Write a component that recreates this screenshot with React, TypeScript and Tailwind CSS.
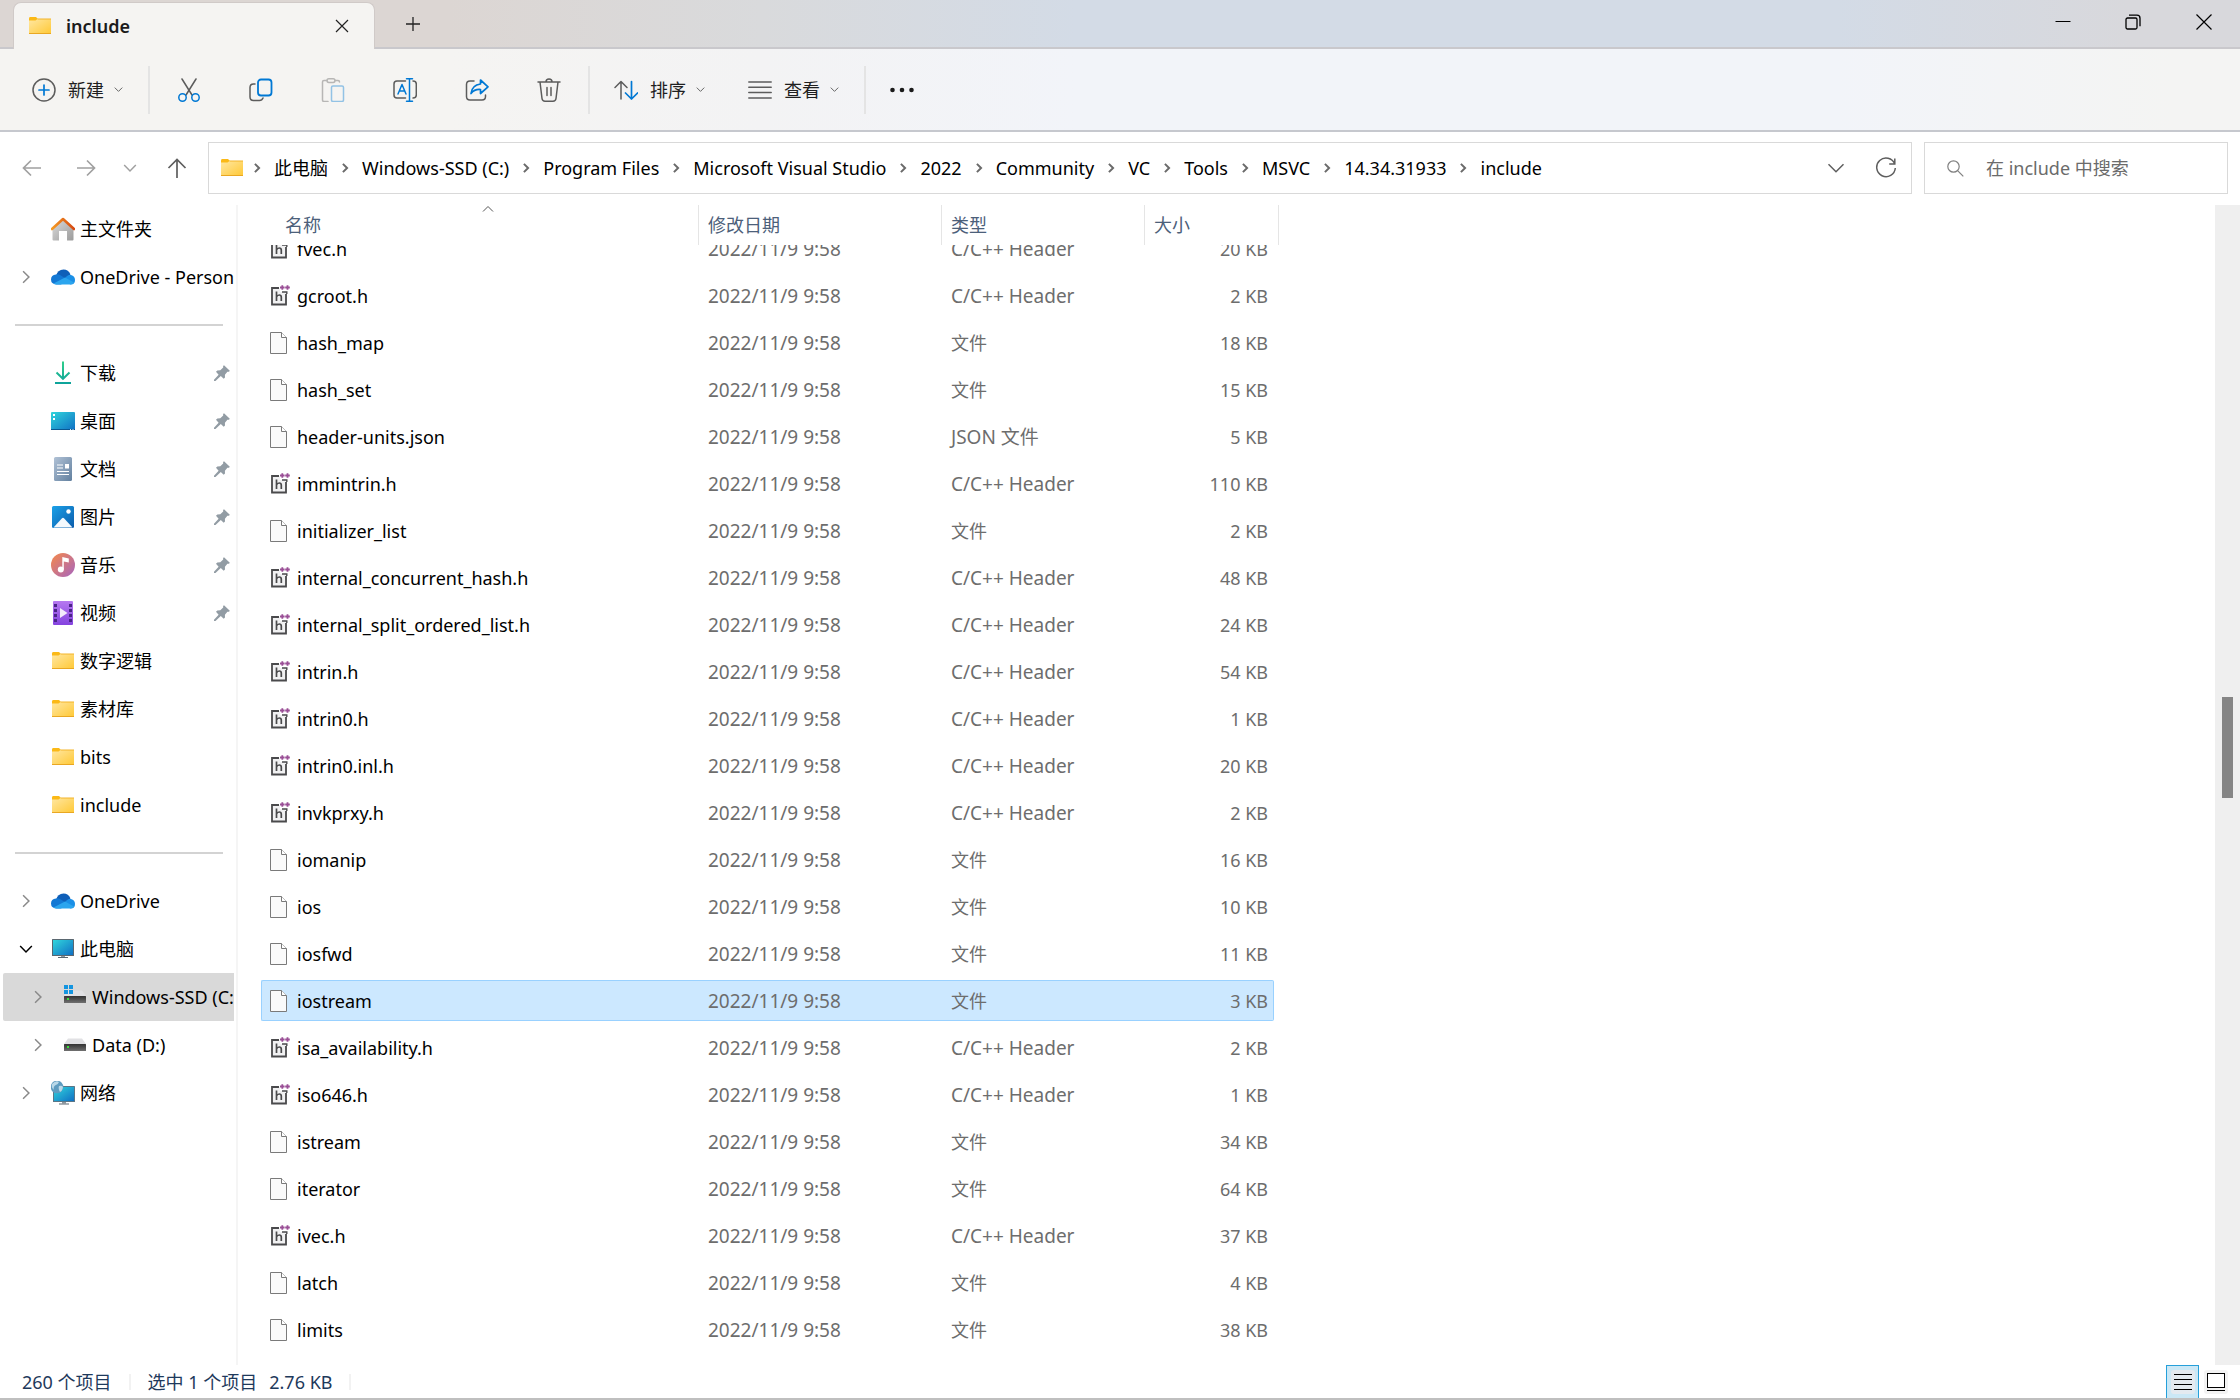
import { useEffect, useRef, useState } from 'react';
import type { ReactNode } from 'react';

type FileRow = { name: string; kind: 'header' | 'plain' | 'json'; size: string };

const files: FileRow[] = [
  { name: 'fvec.h', kind: 'header', size: '20 KB' },
  { name: 'gcroot.h', kind: 'header', size: '2 KB' },
  { name: 'hash_map', kind: 'plain', size: '18 KB' },
  { name: 'hash_set', kind: 'plain', size: '15 KB' },
  { name: 'header-units.json', kind: 'json', size: '5 KB' },
  { name: 'immintrin.h', kind: 'header', size: '110 KB' },
  { name: 'initializer_list', kind: 'plain', size: '2 KB' },
  { name: 'internal_concurrent_hash.h', kind: 'header', size: '48 KB' },
  { name: 'internal_split_ordered_list.h', kind: 'header', size: '24 KB' },
  { name: 'intrin.h', kind: 'header', size: '54 KB' },
  { name: 'intrin0.h', kind: 'header', size: '1 KB' },
  { name: 'intrin0.inl.h', kind: 'header', size: '20 KB' },
  { name: 'invkprxy.h', kind: 'header', size: '2 KB' },
  { name: 'iomanip', kind: 'plain', size: '16 KB' },
  { name: 'ios', kind: 'plain', size: '10 KB' },
  { name: 'iosfwd', kind: 'plain', size: '11 KB' },
  { name: 'iostream', kind: 'plain', size: '3 KB' },
  { name: 'isa_availability.h', kind: 'header', size: '2 KB' },
  { name: 'iso646.h', kind: 'header', size: '1 KB' },
  { name: 'istream', kind: 'plain', size: '34 KB' },
  { name: 'iterator', kind: 'plain', size: '64 KB' },
  { name: 'ivec.h', kind: 'header', size: '37 KB' },
  { name: 'latch', kind: 'plain', size: '4 KB' },
  { name: 'limits', kind: 'plain', size: '38 KB' },
];

const typeLabel = { header: 'C/C++ Header', plain: '文件', json: 'JSON 文件' };

const crumbs = [
  '此电脑',
  'Windows-SSD (C:)',
  'Program Files',
  'Microsoft Visual Studio',
  '2022',
  'Community',
  'VC',
  'Tools',
  'MSVC',
  '14.34.31933',
  'include',
];

/* ---------- icons ---------- */

function FolderIcon() {
  return (
    <svg width="24" height="24" viewBox="0 0 24 24" className="shrink-0">
      <defs>
        <linearGradient id="folder" x1="0" y1="0" x2="1" y2="1">
          <stop offset="0" stopColor="#ffe7a2" />
          <stop offset="1" stopColor="#ffc937" />
        </linearGradient>
      </defs>
      <path d="M1 4.500Q1 3 2 3h6l1.500 1.600V8H1z" fill="#fbb917" />
      <path d="M1 6.500h6.500L9.500 5H23v14.500H1z" fill="url(#folder)" />
      <path d="M9.500 5H23" stroke="#f3b42a" />
      <path d="M1 19.500h22" stroke="#e9a722" />
    </svg>
  );
}

function HomeIcon() {
  return (
    <svg width="24" height="24" viewBox="0 0 24 24">
      <defs>
        <linearGradient id="home" x1="0" y1="0" x2="1" y2="1">
          <stop offset="0" stopColor="#dcdcdc" />
          <stop offset="1" stopColor="#9b9b9b" />
        </linearGradient>
        <linearGradient id="roof" x1="0" y1="0" x2="1" y2="0">
          <stop offset="0" stopColor="#f59a23" />
          <stop offset="1" stopColor="#d64a12" />
        </linearGradient>
      </defs>
      <path d="M1.500 11L12 2l10.500 9v11.500q0 1-1 1H16V14H8v9.500H2.500q-1 0-1-1z" fill="url(#home)" />
      <path d="M1 12L12 2l11 10" fill="none" stroke="url(#roof)" strokeWidth="2.600" strokeLinecap="round" strokeLinejoin="round" />
    </svg>
  );
}

function CloudIcon() {
  return (
    <svg width="24" height="24" viewBox="0 0 24 24">
      <path d="M5 11q1.500-6.500 7.500-6.500 5 0 7 5L12 15z" fill="#0f5fb8" />
      <path d="M5.500 19.500Q0 19 0 14.500 0 10 5 9.500q2-.5 4 .6l8 5-7 4.400z" fill="#1378d4" />
      <path d="M11.500 15.500L16 11q2-1.500 4-1 4 1.200 4 5 0 4.500-4.500 4.500z" fill="#1a8fe6" />
      <path d="M2.500 18.500L14 12.500l9 5q-1 2-3.500 2h-14q-2 0-3-1z" fill="#2ba5ee" />
    </svg>
  );
}

function DownloadIcon() {
  return (
    <svg width="24" height="24" viewBox="0 0 24 24" fill="none" strokeWidth="2">
      <defs>
        <linearGradient id="down" x1="0" y1="0" x2="0" y2="24" gradientUnits="userSpaceOnUse">
          <stop offset="0" stopColor="#31cf8a" />
          <stop offset="1" stopColor="#0ba09c" />
        </linearGradient>
      </defs>
      <path d="M12 .5l.01 17M5.500 11.500l6.500 6.300 6.500-6.300M4 22l16 .01" stroke="url(#down)" />
    </svg>
  );
}

function DesktopIcon() {
  return (
    <svg width="24" height="24" viewBox="0 0 24 24">
      <defs>
        <linearGradient id="screen" x1="0" y1="0" x2="1" y2="1">
          <stop offset="0" stopColor="#30d5dc" />
          <stop offset="1" stopColor="#1070c4" />
        </linearGradient>
      </defs>
      <rect y="3" width="24" height="18" rx="1" fill="url(#screen)" />
      <path d="M0 20h24v.5q0 .5-.5.500H.5q-.5 0-.5-.5z" fill="#0a5791" />
      <path d="M2 5h2v2H2zM2 9h2v2H2z" fill="#fff" />
      <path d="M19 20h1v1h-1zM21.500 20h1v1h-1z" fill="#cfe6f6" />
    </svg>
  );
}

function DocumentIcon() {
  return (
    <svg width="24" height="24" viewBox="0 0 24 24">
      <defs>
        <linearGradient id="doc" x1="0" y1="0" x2="1" y2="1">
          <stop offset="0" stopColor="#b1c2d6" />
          <stop offset="1" stopColor="#62809f" />
        </linearGradient>
      </defs>
      <rect x="3" width="18" height="24" rx="1.500" fill="url(#doc)" />
      <path d="M6 8h6M6 11h6M6 14.500h12M6 17.500h12" stroke="#fff" strokeWidth="1.200" />
      <path d="M14 7h4v4.500h-4z" fill="#fff" />
    </svg>
  );
}

function PictureIcon() {
  return (
    <svg width="24" height="24" viewBox="0 0 24 24">
      <defs>
        <linearGradient id="pic" x1="0" y1="0" x2="1" y2="1">
          <stop offset="0" stopColor="#1ba1e8" />
          <stop offset="1" stopColor="#0b5cab" />
        </linearGradient>
      </defs>
      <rect x="1" y="1" width="22" height="22" rx="1.500" fill="url(#pic)" />
      <circle cx="17.500" cy="6.500" r="2.200" fill="#fff" />
      <path d="M2.500 22.500L11 13.200q1-1 2 0l8.500 9.300z" fill="#f4f9fd" />
    </svg>
  );
}

function MusicIcon() {
  return (
    <svg width="24" height="24" viewBox="0 0 24 24">
      <defs>
        <linearGradient id="music" x1="0" y1="0" x2="1" y2="1">
          <stop offset=".1" stopColor="#ee8555" />
          <stop offset=".9" stopColor="#ae68b4" />
        </linearGradient>
      </defs>
      <circle cx="12" cy="12" r="12" fill="url(#music)" />
      <circle cx="9.800" cy="16.500" r="3" fill="#fff" />
      <path d="M11.300 4l6.500 1.500v4l-5-1v8h-1.500z" fill="#fff" />
    </svg>
  );
}

function VideoIcon() {
  return (
    <svg width="24" height="24" viewBox="0 0 24 24">
      <defs>
        <linearGradient id="video" x1="0" y1="0" x2="0" y2="1">
          <stop offset="0" stopColor="#b678f0" />
          <stop offset="1" stopColor="#8443df" />
        </linearGradient>
      </defs>
      <rect x="2" width="20" height="24" rx="1" fill="url(#video)" />
      <path
        d="M3 3h3v3H3zM3 8h3v3H3zM3 13h3v3H3zM3 18h3v3H3zM18 3h3v3h-3zM18 8h3v3h-3zM18 13h3v3h-3zM18 18h3v3h-3z"
        fill="#4a2488"
      />
      <path d="M9 7l7.500 5L9 17z" fill="#f3ecfb" />
    </svg>
  );
}

function ComputerIcon() {
  return (
    <svg width="24" height="24" viewBox="0 0 24 24">
      <rect x="1" y="2" width="22" height="17" rx=".5" fill="#5a6770" />
      <rect x="2" y="3" width="20" height="15" fill="url(#screen)" />
      <path d="M10 19h4v1.500h-4z" fill="#8b979f" />
      <path d="M7 20.500h10" stroke="#5a6770" strokeWidth="1.200" />
    </svg>
  );
}

function DriveIcon({ system }: { system?: boolean }) {
  return (
    <svg width="24" height="24" viewBox="0 0 24 24">
      <defs>
        <linearGradient id="drive" x1="0" y1="0" x2="0" y2="1">
          <stop offset="0" stopColor="#333" />
          <stop offset="1" stopColor="#707070" />
        </linearGradient>
      </defs>
      <path d="M5 5.500h14l4 5.500H1z" fill="#e1e1e4" />
      <rect x="1" y="11" width="22" height="7" rx=".6" fill="url(#drive)" />
      <path d="M4 13h2v2H4z" fill="#3ae03a" />
      {system && <path d="M1 0h4v4H1zM6 0h4v4H6zM1 5h4v4H1zM6 5h4v4H6z" fill="#1495e0" />}
    </svg>
  );
}

function NetworkIcon() {
  return (
    <svg width="24" height="24" viewBox="0 0 24 24">
      <rect x="2" y="5" width="22" height="16" rx=".5" fill="#5b7686" />
      <rect x="3" y="6" width="20" height="14" fill="url(#screen)" />
      <path d="M11 21h4v1.500h-4z" fill="#8b979f" />
      <path d="M8 23h10" stroke="#5a6770" strokeWidth="1.200" />
      <circle cx="6" cy="6" r="6.300" fill="#5f9cc0" />
      <path d="M1 3q4-4 7-2-1 3-4 3.500Q2 6 3 9 0 7 1 3zM8 5q3-1 4 1-.5 4-3 5-2-3-1-6z" fill="#b9d8e8" />
    </svg>
  );
}

function PinIcon() {
  return (
    <svg width="16" height="16" viewBox="0 0 16 16" className="shrink-0">
      <path
        d="M10 .3l5.800 5.500-.8 1-1.600-.1-2.500 3 .1 2.800-1.300 1.300-2.900-2.800L1.500 16H0v-1.200l4.600-5.100L2 6.800l1.300-1.400 3-.1 2.900-2.700L9.100 1z"
        fill="#929ca4"
      />
    </svg>
  );
}

function PageIcon() {
  return (
    <svg width="18" height="22" viewBox="0 0 18 22" className="shrink-0">
      <path d="M.5.500h11l5 5v16H.5z" fill="#fafafa" stroke="#7a7a7a" />
      <path d="M11.500.500v5h5" fill="#fff" stroke="#7a7a7a" />
    </svg>
  );
}

function HeaderFileIcon() {
  return (
    <svg width="20" height="22" viewBox="0 0 20 22" className="shrink-0">
      <path d="M2 3h8v4h7v12H2z" fill="#f1f1f2" />
      <path d="M9 3H2v16.500h14V9" fill="none" stroke="#4a4a4c" strokeWidth="1.800" />
      <path d="M12 7h4.800v2" fill="none" stroke="#4a4a4c" strokeWidth="1.400" />
      <path d="M6.500 6.500V16M6.500 12q.8-2 2.800-2 2 0 2 2.200V16" fill="none" stroke="#4a4a4c" strokeWidth="1.700" />
      <path d="M10 2.500h4.600M12.300.200v4.600M15.200 2.500h4.600M17.500.200v4.600" stroke="#9a4f96" strokeWidth="1.800" />
    </svg>
  );
}

function Chevron({ dir, size = 12, className = '' }: { dir: 'right' | 'down' | 'up'; size?: number; className?: string }) {
  const d = {
    right: 'M3.500 1l5 5-5 5',
    down: 'M1 3.500l5 5 5-5',
    up: 'M1 8.500l5-5 5 5',
  }[dir];
  return (
    <svg width={size} height={size} viewBox="0 0 12 12" fill="none" stroke="currentColor" className={`shrink-0 ${className}`}>
      <path d={d} vectorEffect="non-scaling-stroke" />
    </svg>
  );
}

/* ---------- title bar ---------- */

function TitleBar() {
  return (
    <header className="flex h-[49px] items-end justify-between border-b-2 border-[#c9c8cc] bg-[linear-gradient(90deg,#dcd6d3_20%,#d9dadc_34%,#d3dbe6_48%,#d3dbe6_82%,#d8d8dc_95%)]">
      <div className="flex h-full items-end">
        <div className="ml-[13px] -mb-0.5 flex h-[47px] w-[362px] items-center rounded-t-lg border border-b-0 border-[#d0cac8] bg-[#f5f4f2] pr-5 pl-3.5">
          <FolderIcon />
          <span className="ml-3.5 flex-1 font-semibold text-[#1b1b1b]">include</span>
          <button aria-label="关闭标签页" className="flex size-6 items-center justify-center">
            <svg width="14" height="14" viewBox="0 0 14 14" stroke="#222" strokeWidth="1.200">
              <path d="M1 1l12 12M13 1L1 13" />
            </svg>
          </button>
        </div>
        <button aria-label="新建标签页" className="ml-6 flex h-[46px] w-7 items-center justify-center">
          <svg width="16" height="16" viewBox="0 0 16 16" stroke="#222" strokeWidth="1.300">
            <path d="M8 1v14M1 8h14" />
          </svg>
        </button>
      </div>
      <div className="flex h-full items-start">
        <button aria-label="最小化" className="flex h-[43px] w-[70px] items-center justify-center">
          <svg width="16" height="16" viewBox="0 0 16 16" stroke="#000">
            <path d="M.5 7.500h15" />
          </svg>
        </button>
        <button aria-label="还原" className="flex h-[43px] w-[70px] items-center justify-center">
          <svg width="16" height="16" viewBox="0 0 16 16" fill="none" stroke="#000" strokeWidth="1.300">
            <rect x="1" y="4" width="11" height="11" rx="1.500" />
            <path d="M4 1.200h8q3 0 3 3v8" />
          </svg>
        </button>
        <button aria-label="关闭" className="flex h-[43px] w-[72px] items-center justify-center">
          <svg width="16" height="16" viewBox="0 0 16 16" stroke="#000" strokeWidth="1.200">
            <path d="M.5.500l15 15M15.500.500l-15 15" />
          </svg>
        </button>
      </div>
    </header>
  );
}

/* ---------- command bar ---------- */

const BLUE = '#0078d4';

function ToolSvg({ children, faded }: { children: ReactNode; faded?: boolean }) {
  return (
    <svg
      width="24"
      height="24"
      viewBox="0 0 24 24"
      fill="none"
      stroke="#5c5c5c"
      strokeWidth="1.500"
      strokeLinecap="round"
      strokeLinejoin="round"
      className={faded ? 'opacity-40' : ''}
    >
      {children}
    </svg>
  );
}

function CommandBar() {
  const tools = [
    {
      label: '剪切',
      icon: (
        <ToolSvg>
          <path d="M5 1l10 16M19 1L9 17" />
          <g stroke={BLUE}>
            <circle cx="5.500" cy="19.500" r="3.700" />
            <circle cx="18.500" cy="19.500" r="3.700" />
          </g>
        </ToolSvg>
      ),
    },
    {
      label: '复制',
      icon: (
        <ToolSvg>
          <path d="M6 6H4.500Q1 6 1 9.500V19q0 3.500 3.500 3.500h6q2.500 0 3.500-2.500" />
          <rect x="9" y="1.500" width="13.500" height="16" rx="3" stroke={BLUE} strokeWidth="1.800" />
        </ToolSvg>
      ),
    },
    {
      label: '粘贴',
      icon: (
        <ToolSvg faded>
          <path d="M6 2.500H3Q1.500 2.500 1.500 4v18q0 1.500 1.500 1.500h4M14 2.500h3q1.500 0 1.500 1.500" />
          <rect x="6" y=".8" width="8" height="3.600" rx="1.800" />
          <rect x="10.500" y="8" width="12" height="15.500" rx="1.500" stroke={BLUE} />
        </ToolSvg>
      ),
    },
    {
      label: '重命名',
      icon: (
        <ToolSvg>
          <path d="M12.500 3H4Q1 3 1 6v11q0 3 3 3h8.500M20 3q3.300 0 3.300 3v11q0 3-3.300 3" />
          <path d="M5 16l4-9.500L13 16M6.300 13h5.400M16.500 1v22M13.500.800h6M13.500 23.200h6" stroke={BLUE} />
        </ToolSvg>
      ),
    },
    {
      label: '共享',
      icon: (
        <ToolSvg>
          <path d="M9 3H5Q1.500 3 1.500 6.500v12Q1.500 22 5 22h12q3.500 0 3.500-3.500V17" />
          <path d="M15.500 2l7.500 6.800-7.500 6.700v-4q-6-.5-9.500 4Q7 7 15.500 6z" stroke={BLUE} strokeWidth="1.700" />
        </ToolSvg>
      ),
    },
    {
      label: '删除',
      icon: (
        <ToolSvg>
          <path d="M1 4h22M9 4q0-3 3-3t3 3M3 4l2 16.500q.4 2.700 3 2.700h8q2.600 0 3-2.700L21 4M10 9.500v8M14 9.500v8" />
        </ToolSvg>
      ),
    },
  ];

  return (
    <div
      role="toolbar"
      className="flex h-[83px] items-center border-b-2 border-[#c6c8ce] bg-[linear-gradient(90deg,#f5f4f2_20%,#f3f3f4_34%,#f2f4f9_48%,#f2f4f9_82%,#f4f4f3_97%)] pl-8 text-[#1f1f1f]"
    >
      <button className="flex h-12 w-[116px] items-center">
        <ToolSvg>
          <circle cx="12" cy="12" r="11" />
          <path d="M12 7v10M7 12h10" stroke={BLUE} strokeWidth="1.700" />
        </ToolSvg>
        <span className="ml-3">新建</span>
        <Chevron dir="down" size={9} className="ml-2.5 text-[#666]" />
      </button>
      <span className="h-12 w-0.5 bg-[#e4e4e4]" />
      <div className="flex px-[3px]">
        {tools.map((t) => (
          <button key={t.label} aria-label={t.label} className="flex h-12 w-18 items-center justify-center">
            {t.icon}
          </button>
        ))}
      </div>
      <span className="h-12 w-0.5 bg-[#e4e4e4]" />
      <button className="ml-6 flex h-12 w-[134px] items-center">
        <ToolSvg>
          <path d="M7 21V3.500M1 9.500l6-6 6 6" />
          <path d="M17.500 3.500V21M11.500 15l6 6 6-6" stroke={BLUE} strokeWidth="1.700" />
        </ToolSvg>
        <span className="ml-3">排序</span>
        <Chevron dir="down" size={9} className="ml-2.5 text-[#666]" />
      </button>
      <button className="flex h-12 w-[116px] items-center">
        <ToolSvg>
          <path d="M.8 4h22.400M.8 9.300h22.400M.8 14.600h22.400M.8 20h22.400" />
        </ToolSvg>
        <span className="ml-3">查看</span>
        <Chevron dir="down" size={9} className="ml-2.5 text-[#666]" />
      </button>
      <span className="h-12 w-0.5 bg-[#e4e4e4]" />
      <button aria-label="查看更多" className="ml-6 flex h-12 w-6 items-center justify-center">
        <svg width="24" height="6" viewBox="0 0 24 6" fill="#1b1b1b">
          <circle cx="2.500" cy="3" r="2.300" />
          <circle cx="12" cy="3" r="2.300" />
          <circle cx="21.500" cy="3" r="2.300" />
        </svg>
      </button>
    </div>
  );
}

/* ---------- address bar ---------- */

function AddressBar() {
  return (
    <div className="mb-px flex h-[72px] items-center pr-3 pl-5">
      <nav className="flex w-[188px] items-center text-[#a0a0a0]">
        <button aria-label="后退" className="flex w-6 justify-center">
          <svg width="20" height="20" viewBox="0 0 20 20" fill="none" stroke="currentColor" strokeWidth="1.700">
            <path d="M19 10H1.500M9 2.500L1.500 10 9 17.500" />
          </svg>
        </button>
        <button aria-label="前进" className="ml-[30px] flex w-6 justify-center">
          <svg width="20" height="20" viewBox="0 0 20 20" fill="none" stroke="currentColor" strokeWidth="1.700">
            <path d="M1 10h17.500M11 2.500l7.500 7.500-7.500 7.500" />
          </svg>
        </button>
        <button aria-label="最近浏览的位置" className="ml-5 flex w-6 justify-center">
          <Chevron dir="down" size={14} className="stroke-[1.500]" />
        </button>
        <button aria-label="上移" className="ml-[23px] flex w-6 justify-center text-[#5e5e5e]">
          <svg width="20" height="20" viewBox="0 0 20 20" fill="none" stroke="currentColor" strokeWidth="1.700">
            <path d="M10 20V1.500M1.500 10L10 1.500l8.500 8.500" />
          </svg>
        </button>
      </nav>
      <div className="flex h-[52px] flex-1 items-center border border-[#d9d9d9] bg-white pl-[11px]">
        <FolderIcon />
        {crumbs.map((c, i) => (
          <span key={c} className="flex items-center whitespace-nowrap">
            <Chevron dir="right" size={10} className={`mr-3 stroke-2 text-[#6a6a6a] ${i === 0 ? 'ml-2' : 'ml-3'}`} />
            <a href="#" className="text-black">
              {c}
            </a>
          </span>
        ))}
        <button aria-label="以前的位置" className="ml-auto text-[#5e5e5e]">
          <Chevron dir="down" size={18} className="stroke-[1.500]" />
        </button>
        <button aria-label="刷新" className="mr-3.5 ml-[30px]">
          <svg width="22" height="22" viewBox="0 0 22 22" fill="none" stroke="#5e5e5e" strokeWidth="1.500">
            <path d="M19.700 7A9.300 9.300 0 1 0 20.300 11M19.800 1.500V7h-5.600" />
          </svg>
        </button>
      </div>
      <label className="ml-3 flex h-[52px] w-[304px] items-center border border-[#d9d9d9] bg-white pl-[22px]">
        <svg width="17" height="17" viewBox="0 0 17 17" fill="none" stroke="#808080" strokeWidth="1.200">
          <circle cx="6.500" cy="6.500" r="5.700" />
          <path d="M10.600 10.600l5.700 5.700" />
        </svg>
        <input
          type="search"
          aria-label="搜索"
          placeholder="在 include 中搜索"
          className="ml-[22px] min-w-0 flex-1 outline-none placeholder:text-[#6b6b6b]"
        />
      </label>
    </div>
  );
}

/* ---------- sidebar ---------- */

type NavProps = {
  icon: ReactNode;
  label: string;
  arrow?: 'right' | 'down';
  nested?: boolean;
  pinned?: boolean;
  active?: boolean;
};

function NavItem({ icon, label, arrow, nested, pinned, active }: NavProps) {
  return (
    <li className="ml-[3px]">
      <button
        className={`flex h-12 w-full items-center overflow-hidden rounded-l-xs text-left ${nested ? 'pl-7' : 'pl-4'} ${
          active ? 'bg-[#d9d9d9]' : ''
        }`}
      >
        <span className="flex w-8 shrink-0 items-center">
          {arrow && (
            <Chevron dir={arrow} size={14} className={arrow === 'down' ? 'stroke-[1.500] text-black' : 'stroke-[1.500] text-[#8a8a8a]'} />
          )}
        </span>
        <span className="shrink-0">{icon}</span>
        <span className="ml-[5px] whitespace-nowrap">{label}</span>
        {pinned && (
          <span className="mr-1 ml-auto">
            <PinIcon />
          </span>
        )}
      </button>
    </li>
  );
}

function NavDivider() {
  return (
    <li className="flex h-12 items-center pr-[11px] pl-[15px]">
      <span className="h-0.5 w-full bg-[#d3d3d3]" />
    </li>
  );
}

function Sidebar() {
  return (
    <aside className="w-[238px] shrink-0 border-r-2 border-[#f5f5f5]">
      <ul className="w-[234px] text-black">
        <NavItem icon={<HomeIcon />} label="主文件夹" />
        <NavItem icon={<CloudIcon />} label="OneDrive - Personal" arrow="right" />
        <NavDivider />
        <NavItem icon={<DownloadIcon />} label="下载" pinned />
        <NavItem icon={<DesktopIcon />} label="桌面" pinned />
        <NavItem icon={<DocumentIcon />} label="文档" pinned />
        <NavItem icon={<PictureIcon />} label="图片" pinned />
        <NavItem icon={<MusicIcon />} label="音乐" pinned />
        <NavItem icon={<VideoIcon />} label="视频" pinned />
        <NavItem icon={<FolderIcon />} label="数字逻辑" />
        <NavItem icon={<FolderIcon />} label="素材库" />
        <NavItem icon={<FolderIcon />} label="bits" />
        <NavItem icon={<FolderIcon />} label="include" />
        <NavDivider />
        <NavItem icon={<CloudIcon />} label="OneDrive" arrow="right" />
        <NavItem icon={<ComputerIcon />} label="此电脑" arrow="down" />
        <NavItem icon={<DriveIcon system />} label="Windows-SSD (C:)" arrow="right" nested active />
        <NavItem icon={<DriveIcon />} label="Data (D:)" arrow="right" nested />
        <NavItem icon={<NetworkIcon />} label="网络" arrow="right" />
      </ul>
    </aside>
  );
}

/* ---------- file list ---------- */

function FileList() {
  const [selected, setSelected] = useState('iostream');
  const scroller = useRef<HTMLDivElement>(null);

  // start with the first row partly under the sticky header
  useEffect(() => {
    if (scroller.current) scroller.current.scrollTop = 29;
  }, []);

  return (
    <div ref={scroller} className="min-w-0 flex-1 overflow-hidden pl-[23px]">
      <table className="mb-4 w-[1018px] table-fixed border-separate border-spacing-x-0 border-spacing-y-[6px]">
        <colgroup>
          <col className="w-[438px]" />
          <col className="w-[243px]" />
          <col className="w-[203px]" />
          <col className="w-[129px]" />
          <col className="w-[5px]" />
        </colgroup>
        <thead className="sticky top-0 z-10 bg-white text-left text-[#4c607a]">
          <tr>
            <th className="relative h-10 border-r border-[#e5e5e5] pl-6 font-normal">
              <Chevron dir="up" size={12} className="absolute -top-0.5 left-[221px] text-[#555]" />
              名称
            </th>
            <th className="border-r border-[#e5e5e5] pl-[9px] font-normal">修改日期</th>
            <th className="border-r border-[#e5e5e5] pl-[9px] font-normal">类型</th>
            <th className="pl-[9px] font-normal">大小</th>
            <td className="border-r border-[#e5e5e5]" />
          </tr>
        </thead>
        <tbody className="text-[#6d6d6d]">
          {files.map((f) => {
            const on = f.name === selected;
            const cell = on ? 'border-y border-[#99d1ff] bg-[#cce8ff]' : 'border-y border-transparent';
            return (
              <tr key={f.name} onClick={() => setSelected(f.name)}>
                <td className={`h-[41px] rounded-l-xs border-l pl-2 text-black ${cell}`}>
                  <span className={`flex items-center ${f.kind === 'header' ? 'gap-[7px]' : 'gap-[9px]'}`}>
                    {f.kind === 'header' ? <HeaderFileIcon /> : <PageIcon />}
                    {f.name}
                  </span>
                </td>
                <td className={`pl-[9px] text-[19px] ${cell}`}>2022/11/9 9:58</td>
                <td className={`pl-[9px] ${f.kind === 'plain' ? '' : 'text-[19px]'} ${cell}`}>{typeLabel[f.kind]}</td>
                <td className={`rounded-r-xs border-r pr-[5px] text-right ${cell}`}>{f.size}</td>
              </tr>
            );
          })}
        </tbody>
      </table>
    </div>
  );
}

function StatusBar() {
  return (
    <footer className="flex h-[35px] items-center border-b-2 border-[#bfbfbf] pl-[22px] text-[#1e395b]">
      <span>260 个项目</span>
      <span className="mx-[17px] h-4 w-0.5 bg-[#f2f2f2]" />
      <span>选中 1 个项目</span>
      <span className="ml-3">2.76 KB</span>
      <span className="mx-[17px] h-4 w-0.5 bg-[#f2f2f2]" />
      <div className="mr-3 ml-auto flex h-full">
        <button aria-label="详细信息" className="flex h-full w-[33px] items-center justify-center border border-b-0 border-[#26a0da] bg-[#cbe8f6]">
          <svg width="24" height="24" viewBox="0 0 24 24" stroke="#000">
            <rect width="24" height="24" rx="3" fill="#e4eaf0" stroke="none" />
            <path d="M3 4.500h18M3 9.500h18M3 14.500h18M3 19.500h18" />
          </svg>
        </button>
        <button aria-label="大图标" className="ml-[5px] flex h-[33px] w-6 items-center justify-center">
          <svg width="24" height="24" viewBox="0 0 24 24" fill="none" stroke="#000">
            <rect width="24" height="24" rx="3" fill="#f3f3f3" stroke="none" />
            <rect x="3.500" y="3.500" width="17" height="14" fill="#fff" />
            <path d="M3 20.500h18" />
          </svg>
        </button>
      </div>
    </footer>
  );
}

export default function App() {
  return (
    <div className="flex h-screen flex-col bg-white font-['Noto_Sans','Noto_Sans_CJK_SC',sans-serif] text-[18px] leading-6">
      <TitleBar />
      <CommandBar />
      <AddressBar />
      <main className="flex min-h-0 flex-1">
        <Sidebar />
        <FileList />
        <div className="w-[25px] shrink-0 bg-[#efefef] pt-[492px]">
          <div className="ml-[7px] h-[101px] w-[11px] bg-[#858585]" />
        </div>
      </main>
      <StatusBar />
    </div>
  );
}
